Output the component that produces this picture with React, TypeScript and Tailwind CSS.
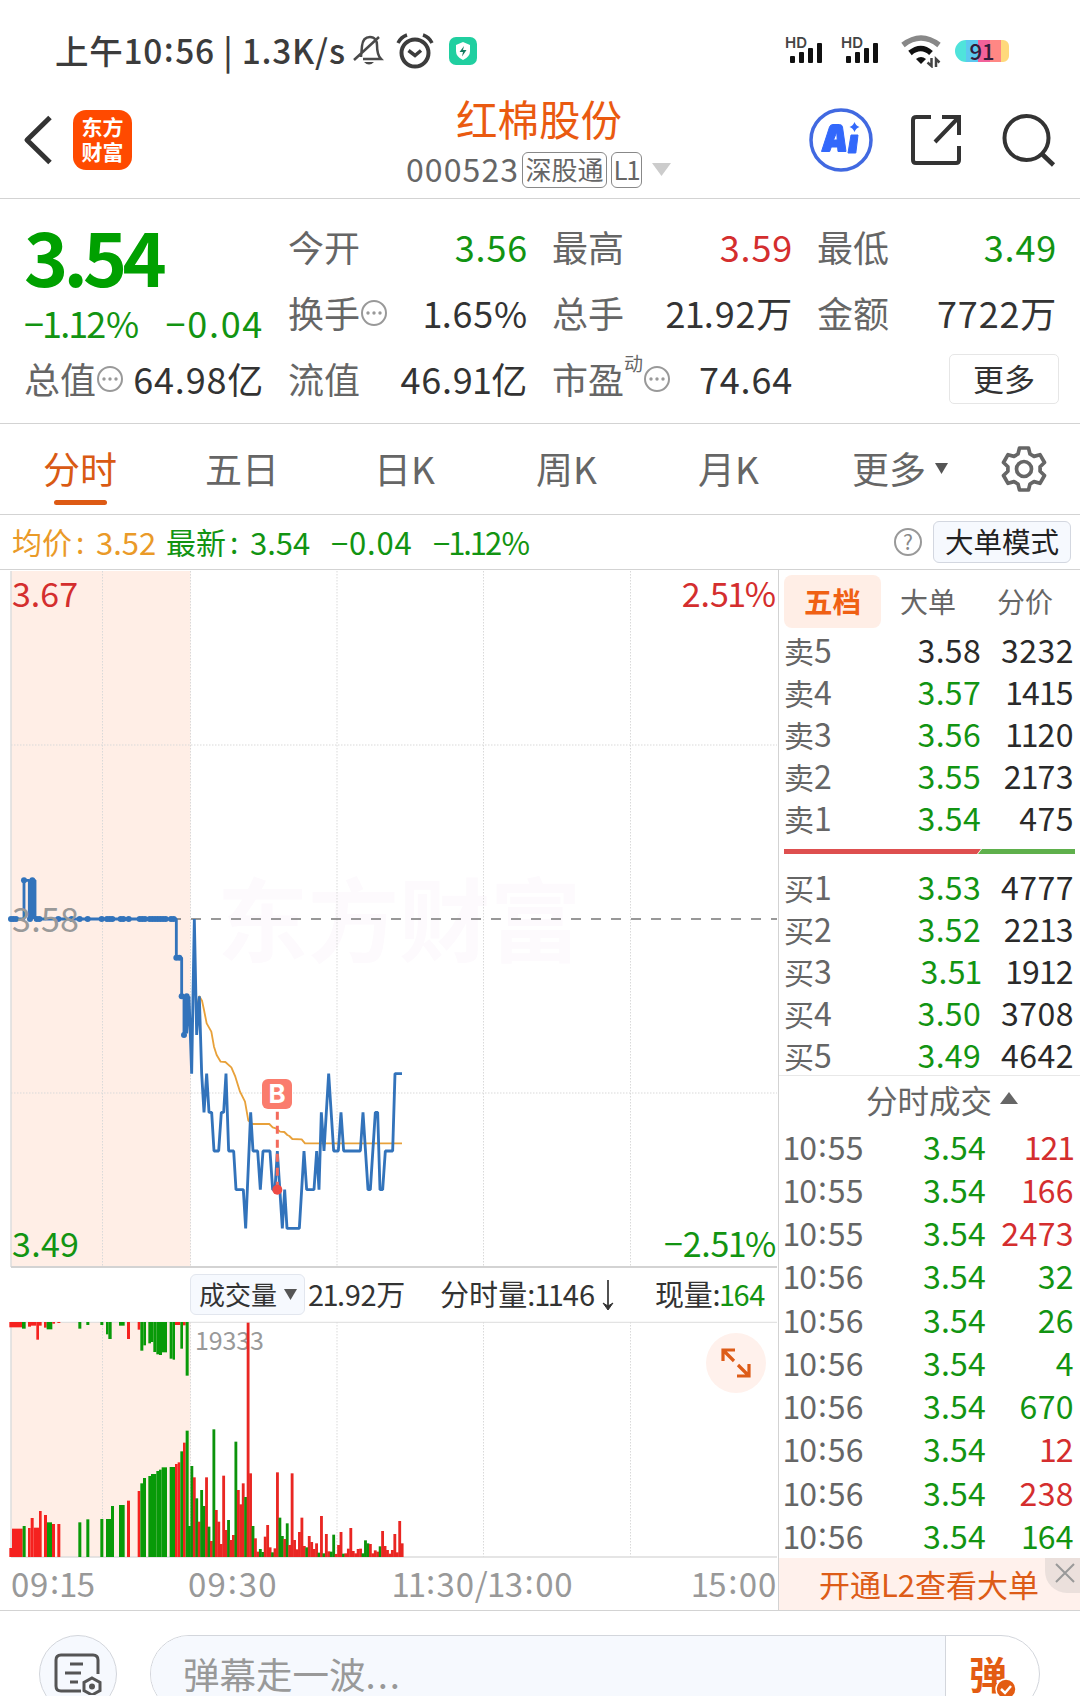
import React from "react";

const RED = "#f5221f";
const GREEN = "#089a08";

type Bar = [number, number, number, "r" | "g"];

// Call-auction bars: left, right, top edge, direction
const auctionBars: Bar[] = [
  [28, 36, 864, "r"], [36, 68, 806, "r"], [68, 77, 798, "g"], [84, 92, 804, "r"], [92, 101, 774, "r"],
  [101, 117, 803, "r"], [117, 125, 753, "r"], [132, 141, 765, "r"], [141, 156, 787, "g"], [156, 165, 792, "r"],
  [172, 181, 792, "r"], [235, 244, 787, "g"], [259, 268, 778, "g"], [301, 310, 777, "g"], [318, 333, 777, "g"],
  [333, 342, 738, "g"], [357, 374, 735, "g"], [381, 390, 722, "r"], [413, 421, 693, "r"], [421, 429, 670, "g"],
  [429, 438, 654, "g"], [445, 453, 648, "g"], [453, 469, 642, "g"], [469, 477, 633, "g"], [477, 485, 629, "g"],
  [485, 501, 622, "g"], [509, 525, 621, "g"], [525, 533, 612, "r"], [533, 541, 607, "r"], [541, 549, 574, "g"],
  [549, 557, 548, "r"], [557, 566, 512, "g"],
];

// Unmatched volume hanging from the top: left, right, bottom edge, direction
const unmatchedBars: Bar[] = [
  [28, 66, 202, "r"], [66, 77, 206, "g"], [84, 93, 200, "r"], [93, 109, 197, "r"], [109, 117, 239, "r"],
  [117, 125, 197, "r"], [132, 140, 203, "r"], [140, 157, 208, "g"], [157, 165, 191, "r"], [172, 181, 189, "r"],
  [235, 244, 206, "g"], [259, 268, 195, "g"], [301, 310, 195, "g"], [318, 325, 223, "g"], [325, 335, 237, "g"],
  [357, 374, 197, "g"], [381, 390, 237, "r"], [413, 421, 209, "r"], [421, 430, 272, "g"], [430, 438, 256, "g"],
  [445, 453, 250, "g"], [453, 460, 246, "g"], [460, 469, 276, "g"], [469, 477, 283, "g"], [477, 486, 285, "g"],
  [486, 501, 277, "g"], [509, 518, 296, "g"], [518, 525, 299, "g"], [525, 541, 195, "r"], [541, 549, 266, "g"],
  [549, 557, 196, "r"], [557, 566, 347, "g"],
];

// One bar a minute from 09:30: top edge and direction
const minuteBars =
  "798g 618g 652r 715g 785r 690g 738g 652r 800g 843r 508g 750r 785r 852r 647r 810r 780g 840r 825r 545g 690r 733r 670r 711g 188r 640r 798g 835r 875r 867g 876g 830r 795r 862r 877g 865r 637r 773g 828g 837r 790g 855r 640r 840r 868r 816r 773r 858r 862g 828r 846r 867r 850r 878g 768r 880g 822r 874r 875g 824g 882r 855r 816r 881g 880r 866r 804r 873r 880r 867r 866r 880g 841g 850g 852r 880r 871r 875r 859g 813r 858r 870r 881r 870r 822r 877r 783r 850r"
    .split(" ")
    .map((s) => ({ top: parseInt(s, 10), up: s.endsWith("r") }));

const pricePath =
  "30,207 72,207 72,91 88,91 88,207 93,91 97,207 101,91 105,91 105,207 529,207 529,323 545,323 545,439 552,439 552,555 560,439 560,550 567,439 575,671 583,207 590,555 598,439 605,671 612,787 620,671 627,787 635,787 642,903 656,903 664,787 671,787 678,671 686,903 701,903 708,1019 730,1019 737,1135 752,787 759,903 773,903 781,1019 789,903 810,903 818,1019 825,1019 832,903 847,1135 854,1019 861,1135 898,1135 912,903 920,1019 942,1019 950,903 957,1019 964,787 972,903 986,671 1001,903 1015,903 1023,787 1031,903 1081,903 1089,787 1104,1019 1111,1019 1126,787 1133,787 1140,1019 1148,1019 1156,903 1178,903 1185,671 1206,671";

const averagePath =
  "590,470 598,439 606,452 612,480 620,520 634,545 642,590 650,615 662,635 676,636 694,652 706,680 720,725 735,755 745,812 757,822 808,822 818,832 830,836 840,845 853,846 862,855 868,858 877,867 905,868 915,880 1206,880";

const auctionDots: [number, number][] = [
  [33, 207], [40, 207], [48, 207], [72, 91], [97, 91], [90, 207], [110, 207], [118, 207], [175, 207], [215, 207],
  [239, 207], [263, 207], [305, 207], [321, 207], [329, 207], [337, 207], [362, 207], [370, 207], [386, 207],
  [419, 207], [427, 207], [435, 207], [449, 207], [457, 207], [465, 207], [473, 207], [481, 207], [489, 207],
  [497, 207], [513, 207], [521, 207], [529, 323], [538, 323], [545, 439], [560, 439], [552, 555],
];

const GRID_X = [102.5, 190.5, 337, 483.5, 630.5];

// Figures with a narrow "1", as in a proportional numeral set
function Num({ children }: { children: string }) {
  return (
    <>
      {children.split(/(1)/).map((part, i) =>
        part === "1" ? <span key={i} className="-mx-[0.045em]">1</span> : part
      )}
    </>
  );
}

function Colon() {
  return <span className="relative -top-[0.08em] mx-[0.02em]">:</span>;
}

function Signal() {
  return (
    <div className="relative h-[34px] w-[37px]">
      <span className="absolute -left-px top-[1px] font-['Inter'] text-[15px] font-semibold leading-[15px] text-[#444]">HD</span>
      <svg className="absolute left-0 top-0" width="37" height="34" fill="#111">
        <rect x="4" y="22" width="5" height="7" rx="1" />
        <rect x="13" y="18" width="5" height="11" rx="1" />
        <rect x="22" y="14" width="5" height="15" rx="1" />
        <rect x="31" y="9" width="5" height="20" rx="1" />
      </svg>
    </div>
  );
}

function StatusBar() {
  return (
    <div className="flex h-[100px] items-center pt-[2px] text-[#3c3c3c]">
      <div className="ml-[55px] w-[293px] whitespace-nowrap pb-[2px] text-[33.500px] font-medium leading-none tracking-[0.75px]">
        上午10<Colon />56 | 1.3K/s
      </div>
      <svg className="ml-[4px]" width="32" height="36" viewBox="0 0 32 36" fill="none" stroke="#4a4a4a" strokeWidth="2.5">
        <path d="M9 24 10 13C10.500 8 13 4 18 4s7 4 7 8c0 7 1 11 4 14H11M2 27 27 4" />
        <path d="M12 29q5 5 10 0z" fill="#4a4a4a" stroke="none" />
      </svg>
      <svg className="ml-[12px]" width="38" height="38" viewBox="0 0 38 38" fill="none" stroke="#3c3c3c" strokeWidth="4">
        <circle cx="19" cy="21" r="13.5" />
        <path d="M12.5 18.500l6.5 5 6-5" strokeWidth="3.5" />
        <path d="M2 11Q5 5 11 3M36 11Q33 5 27 3" strokeWidth="3.5" />
      </svg>
      <div className="ml-[15px] flex h-[28px] w-[28px] items-center justify-center rounded-[7px] bg-[#20cfa0]">
        <svg width="16" height="18" viewBox="0 0 16 18">
          <path d="M8 0 15 3v6q0 6-7 9-7-3-7-9V3z" fill="#fff" />
          <path d="M9 4 4.500 10H8l-1 4.500L11.500 8H8z" fill="#137a60" />
        </svg>
      </div>
      <div className="ml-auto flex items-center">
        <Signal />
        <div className="w-[19px]" />
        <Signal />
        <svg className="ml-[22px]" width="40" height="34" viewBox="0 0 40 34" fill="none">
          <path d="M2 11Q20-3 38 11" stroke="#888" strokeWidth="5.500" />
          <path d="M9 19Q20 10 30 19" stroke="#111" strokeWidth="5.500" />
          <path d="M15 25q5-4 10 0l-5 5z" fill="#111" />
          <path d="M30.500 24v8l-4-3.500M35 33v-8l3.500 3.500" stroke="#444" strokeWidth="2.500" />
        </svg>
        <div className="relative ml-[14px] mr-[71px] h-[22px] w-[54px]">
          <div className="flex h-full w-full overflow-hidden rounded-l-[11px] rounded-r-[6px]">
            <div className="w-[11px] bg-[#4fe3db]" />
            <div className="w-[12px] bg-[#5cc8f0]" />
            <div className="w-[12px] bg-[#f2619a]" />
            <div className="w-[11px] bg-[#ff8784]" />
            <div className="w-[8px] bg-[#ffd97c]" />
          </div>
          <span className="absolute -top-[6px] left-0 w-full text-center text-[22px] font-medium leading-[32px] text-[#321b3b]">91</span>
        </div>
      </div>
    </div>
  );
}

function Header() {
  return (
    <div className="flex h-[99px] items-center border-b border-[#d3d3d3]">
      <svg className="mb-[19px] ml-[22px]" width="32" height="50" viewBox="0 0 32 50" fill="none" stroke="#333" strokeWidth="5" strokeLinejoin="round">
        <path d="M28 2.500 5 25l23 22.500" />
      </svg>
      <div className="mb-[18px] ml-[19px] flex h-[60px] w-[59px] flex-col items-center justify-center rounded-[13px] bg-[#ff4a00] pb-[3px] text-[21px] font-bold leading-[25px] text-white">
        <span>东方</span>
        <span>财富</span>
      </div>
      <div className="ml-[274px] flex h-full w-[265px] flex-col">
        <div className="mt-[-2px] pl-[50px] text-[41.500px] leading-[40px] text-[#ea5a10]">红棉股份</div>
        <div className="mt-[14px] flex h-[35px] items-center text-[#666]">
          <span className="w-[116px] pb-[4px] text-[32px] leading-none tracking-[1.1px]">000523</span>
          <span className="flex h-[36px] w-[85px] shrink-0 items-center justify-center rounded-[6px] border-[1.500px] border-[#888] pb-[2px] text-[26px] leading-none">深股通</span>
          <span className="ml-[4px] flex h-[36px] w-[31px] shrink-0 items-center justify-center rounded-[6px] border-[1.500px] border-[#888] pb-[2px] text-[26px] leading-none"><Num>L1</Num></span>
          <svg className="ml-[10px] shrink-0" width="19" height="13"><path d="M0 0h19L9.500 13z" fill="#ccc" /></svg>
        </div>
      </div>
      <svg className="mb-[18px] ml-[138px] shrink-0" width="64" height="64" viewBox="0 0 64 64">
        <circle cx="32" cy="32" r="30" fill="none" stroke="#4169e1" strokeWidth="3.500" />
        <path d="M12.500 43.500 20.500 19q.8-2.500 3.500-2.500h6.500q2.500 0 3 2.500l3.500 24.500h-8l-.4-4.500h-6.300l-1.600 4.500zM24.500 32h3.700l-.4-8z" fill="#3268fb" fillRule="evenodd" stroke="#3268fb" strokeLinejoin="round" />
        <path d="M42 27h7l-2.200 18h-7.800z" fill="#3268fb" stroke="#3268fb" strokeLinejoin="round" />
        <path d="M45.500 14q1.500 4 5 5-3.500 1-5 5-1.500-4-5-5 3.500-1 5-5z" fill="#3268fb" />
      </svg>
      <svg className="mb-[18px] ml-[36px] shrink-0" width="54" height="54" viewBox="0 0 54 54" fill="none" stroke="#333" strokeWidth="4">
        <path d="M22 4H7.500Q4 4 4 7v40q0 3 3 3h40q3 0 3-3V33M33 4h17v18M50 4 26 29" />
      </svg>
      <svg className="mb-[18px] ml-[37px] shrink-0" width="56" height="56" viewBox="0 0 56 56" fill="none" stroke="#333" strokeWidth="4">
        <circle cx="26.500" cy="26" r="22" />
        <path d="m42 42 11.500 11" strokeWidth="4.500" />
      </svg>
    </div>
  );
}

function Dots() {
  return (
    <svg className="mb-[4px] shrink-0" width="28" height="28" viewBox="0 0 28 28">
      <circle cx="14" cy="14" r="12" fill="none" stroke="#999" strokeWidth="2" />
      <g fill="#999"><circle cx="8" cy="14" r="1.700" /><circle cx="14" cy="14" r="1.700" /><circle cx="20" cy="14" r="1.700" /></g>
    </svg>
  );
}

function Stat({ label, value, color = "text-[#333]", dots = false, sup }: { label: string; value: string; color?: string; dots?: boolean; sup?: string }) {
  return (
    <div className="flex h-[66px] items-center text-[36px] leading-none">
      <span className="shrink-0 pb-[6px] text-[#666]">{label}</span>
      {sup && <span className="mb-[37px] text-[19px] text-[#666]">{sup}</span>}
      {dots && <Dots />}
      <span className={"ml-auto whitespace-nowrap pb-[7px] tracking-[0.8px] " + color}><Num>{value}</Num></span>
    </div>
  );
}

function Quote() {
  return (
    <div className="flex h-[225px] border-b border-[#d3d3d3] pl-[24px] pt-[17px]">
      <div className="w-[240px]">
        <div className="h-[86px] text-[75px] font-bold leading-[77px] tracking-[-4.800px] text-[#00a000]">3.54</div>
        <div className="flex h-[46px] items-center justify-between whitespace-nowrap pb-[6px] text-[36px] leading-none text-[#129412]">
          <span className="tracking-[-0.3px]"><Num>−1.12%</Num></span>
          <span className="tracking-[1.7px]">−0.04</span>
        </div>
        <Stat label="总值" value="64.98亿" dots />
      </div>
      <div className="ml-[24px] w-[240px]">
        <Stat label="今开" value="3.56" color="text-[#129412]" />
        <Stat label="换手" value="1.65%" dots />
        <Stat label="流值" value="46.91亿" />
      </div>
      <div className="ml-[24px] w-[241px]">
        <Stat label="最高" value="3.59" color="text-[#d42e2e]" />
        <Stat label="总手" value="21.92万" />
        <Stat label="市盈" sup="动" value="74.64" dots />
      </div>
      <div className="ml-[24px] w-[240px]">
        <Stat label="最低" value="3.49" color="text-[#129412]" />
        <Stat label="金额" value="7722万" />
        <button className="ml-auto mt-[6px] flex h-[50px] w-[110px] translate-x-[2px] items-center justify-center rounded-[5px] border-[1.500px] border-[#e6e6e6] pb-[3px] text-[31px] leading-none text-[#333]">更多</button>
      </div>
    </div>
  );
}

function PeriodTabs() {
  return (
    <div className="flex h-[91px] items-center border-b border-[#d3d3d3] pb-px text-[37px] leading-none text-[#666]">
      <div className="relative ml-[43px] w-[162px] pb-[1px] text-[#d95a14]">
        分时
        <div className="absolute -bottom-[17px] left-[11px] h-[5px] w-[53px] rounded-full bg-[#dd5a14]" />
      </div>
      <span className="w-[169px] pb-[1px]">五日</span>
      <span className="w-[162px] pb-[1px]">日K</span>
      <span className="w-[162px] pb-[1px]">周K</span>
      <span className="w-[154px] pb-[1px]">月K</span>
      <span className="pb-[1px]">更多</span>
      <svg className="ml-[9px]" width="13" height="11"><path d="M0 0h13L6.500 11z" fill="#555" /></svg>
      <svg className="ml-[52px]" width="48" height="48" viewBox="0 0 48 48" fill="none" stroke="#666" strokeWidth="3.700" strokeLinejoin="round">
        <path d="M19.500 3h9l1.500 6 4 2.400 6-1.700 4.500 7.800-4.400 4.300v4.400l4.400 4.300-4.500 7.800-6-1.700-4 2.400-1.500 6h-9l-1.500-6-4-2.400-6 1.700-4.500-7.800 4.400-4.300v-4.400l-4.400-4.300L8 9.700l6 1.700L18 9z" />
        <circle cx="24" cy="24" r="7.500" />
      </svg>
    </div>
  );
}

function InfoLine() {
  return (
    <div className="flex h-[55px] items-center border-b border-[#d3d3d3] pl-[12px] text-[30px] leading-none text-[#129412]">
      <div className="flex whitespace-nowrap pb-[2px]">
        <span className="w-[84px] text-[#ea9a28]">均价<span className="ml-[4px]">:</span></span>
        <span className="w-[70px] text-[31px] text-[#ea9a28]">3.52</span>
        <span className="w-[84px]">最新<span className="ml-[4px]">:</span></span>
        <span className="w-[81px] text-[31px]">3.54</span>
        <span className="w-[102px] text-[31px] tracking-[0.8px]">−0.04</span>
        <span className="text-[31px] tracking-[-0.7px]"><Num>−1.12%</Num></span>
      </div>
      <div className="ml-auto mr-[11px] flex h-[28px] w-[28px] items-center justify-center rounded-full border-2 border-[#999] pb-[2px] text-[21px] text-[#888]">?</div>
      <div className="mr-[9px] flex h-[42px] w-[138px] items-center justify-center rounded-[6px] border border-[#d3d7e0] bg-[#f6f9fe] pb-[1px] text-[28.500px] text-[#222]">大单模式</div>
    </div>
  );
}

function PriceChart() {
  return (
    <div className="relative h-[698px]">
      <span className="absolute left-[217px] top-[300px] text-[91px] font-bold leading-[91px] text-[#fdfafd]">东方财富</span>
      <svg className="absolute left-0 top-0" width="778" height="698" viewBox="0 570 778 698">
        <rect x="11" y="571" width="179.500" height="696" fill="#ffeee6" />
        <g stroke="#d9d9d9" strokeDasharray="1.500 1.500">
          {GRID_X.map((x) => <path key={x} d={`M${x} 571V1267`} />)}
          <path d="M11 745H777M11 1093H777" />
        </g>
        <path d="M11 571V1267" stroke="#ddd" strokeWidth="1.500" />
        <path d="M11 1267H777" stroke="#d3d3d3" strokeWidth="2" />
        <path d="M171 919H777" stroke="#777" strokeWidth="1.600" strokeDasharray="10 10" />
        <g transform="translate(0 850) scale(.33333)" fill="none" strokeLinejoin="round">
          <polyline points={averagePath} stroke="#e8a13a" strokeWidth="5.500" />
          <polyline points={pricePath} stroke="#3273bb" strokeWidth="8.500" strokeLinejoin="miter" strokeMiterlimit="1" />
          {auctionDots.map(([x, y]) => <circle key={`${x}-${y}`} cx={x} cy={y} r="9" fill="#3273bb" />)}
          <path d="M832 785V1019" stroke="#f36a5c" strokeWidth="9" strokeDasharray="24 18" />
          <circle cx="832" cy="1019" r="15" fill="#ee4a45" />
        </g>
      </svg>
      <div className="absolute left-[262px] top-[509px] flex h-[30px] w-[30px] items-center justify-center rounded-[6px] bg-[#fa7c6d] font-['Inter'] text-[26px] font-bold leading-none text-white">B</div>
      <span className="absolute left-[12px] top-[6px] text-[34px] leading-[34px] text-[#d42e2e]">3.67</span>
      <span className="absolute right-[2px] top-[6px] text-[34px] leading-[34px] text-[#d42e2e]"><Num>2.51%</Num></span>
      <span className="absolute left-[12px] top-[331px] text-[34px] leading-[34px] tracking-[0.3px] text-[#999]">3.58</span>
      <span className="absolute left-[12px] top-[656px] text-[34px] leading-[34px] tracking-[0.3px] text-[#129412]">3.49</span>
      <span className="absolute right-[2px] top-[656px] text-[34px] leading-[34px] tracking-[-0.2px] text-[#129412]"><Num>−2.51%</Num></span>
    </div>
  );
}

function VolumeChart() {
  return (
    <>
      <div className="flex h-[54px] items-center whitespace-nowrap pl-[190px] text-[29px] leading-none text-[#333]">
        <div className="flex h-[41px] w-[115px] shrink-0 items-center rounded-[6px] border border-[#e2e6ee] bg-[#f6f9fe] pl-[8px] text-[26px]">
          <span className="pb-px">成交量</span>
          <svg className="ml-[7px]" width="13" height="11"><path d="M0 0h13L6.500 11z" fill="#555" /></svg>
        </div>
        <span className="ml-[3px] w-[132px] pb-[2px] tracking-[-0.3px]"><Num>21.92万</Num></span>
        <span className="w-[156px] pb-[2px] tracking-[0.1px]"><Num>分时量:1146</Num></span>
        <svg className="mt-px" width="24" height="32" viewBox="0 0 24 32"><path d="M12 1v27" stroke="#333" strokeWidth="1.700" /><path d="m7 24 5 3 5-3-5 7z" fill="#333" stroke="#333" /></svg>
        <span className="ml-[35px] pb-[2px] tracking-[-0.3px]">现量:<span className="text-[#129412]"><Num>164</Num></span></span>
      </div>
      <div className="relative h-[237px]">
        <svg className="absolute left-0 top-0" width="778" height="237" viewBox="0 1321 778 237">
          <rect x="11" y="1322" width="179.500" height="235" fill="#ffeee6" />
          <g stroke="#d9d9d9" strokeDasharray="1.500 1.500">
            {GRID_X.map((x) => <path key={x} d={`M${x} 1322V1557`} />)}
          </g>
          <path d="M11 1322V1557" stroke="#ddd" strokeWidth="1.500" />
          <path d="M11 1322.300H777" stroke="#ddd" />
          <path d="M11 1557H777" stroke="#ddd" strokeWidth="1.500" />
          <text x="195" y="1349.500" fontSize="25" fill="#999" textLength="69">19333</text>
          <g transform="translate(0 1260) scale(.33333)">
            {unmatchedBars.map(([a, b, y, c]) => <rect key={a} x={a} y="186" width={b - a} height={y - 186} fill={c === "r" ? RED : GREEN} />)}
            {auctionBars.map(([a, b, y, c]) => <rect key={a} x={a} y={y} width={b - a} height={891 - y} fill={c === "r" ? RED : GREEN} />)}
            {minuteBars.map((m, i) => <rect key={i} x={564 + i * 7.336} y={m.top} width="8.500" height={891 - m.top} fill={m.up ? "#e92622" : "#0b930b"} />)}
          </g>
        </svg>
        <div className="absolute left-[706px] top-[12px] flex h-[60px] w-[60px] items-center justify-center rounded-full bg-[#fff1ec]">
          <svg width="32" height="32" viewBox="0 0 32 32" fill="none" stroke="#dd5c18" strokeWidth="3.200">
            <path d="M3 14V3h12M3 3l11 11M18 18l11 11M29 17v12H17" />
          </svg>
        </div>
      </div>
      <div className="flex h-[52px] items-center text-[33px] leading-none text-[#999]">
        <span className="ml-[11px] w-[177px] pb-[2px] tracking-[0.8px]"><Num>09</Num><Colon /><Num>15</Num></span>
        <span className="w-[205px] pb-[2px] tracking-[1.2px]">09<Colon />30</span>
        <span className="pb-[2px] tracking-[0.8px]"><Num>11</Num><Colon />30/<Num>13</Num><Colon />00</span>
        <span className="ml-auto mr-px pb-[2px] tracking-[0.8px]"><Num>15</Num><Colon />00</span>
      </div>
    </>
  );
}

const asks = [["卖5", "3.58", "3232"], ["卖4", "3.57", "1415"], ["卖3", "3.56", "1120"], ["卖2", "3.55", "2173"], ["卖1", "3.54", "475"]];
const bids = [["买1", "3.53", "4777"], ["买2", "3.52", "2213"], ["买3", "3.51", "1912"], ["买4", "3.50", "3708"], ["买5", "3.49", "4642"]];
const trades: [string, string, boolean][] = [
  ["55", "121", true], ["55", "166", true], ["55", "2473", true], ["56", "32", false], ["56", "26", false],
  ["56", "4", false], ["56", "670", false], ["56", "12", true], ["56", "238", true], ["56", "164", false],
];

function Level({ row }: { row: string[] }) {
  return (
    <div className="flex h-[42px] items-center pb-[3px] pl-[5px] text-[32px] leading-none">
      <span className="w-[71px] text-[#666]"><span className="text-[30px]">{row[0][0]}</span>{row[0][1]}</span>
      <span className={"w-[126px] text-right tracking-[0.3px] " + (row[1] === "3.58" ? "text-[#2a2a2a]" : "text-[#129412]")}><Num>{row[1]}</Num></span>
      <span className="w-[93px] text-right tracking-[0.5px] text-[#2a2a2a]"><Num>{row[2]}</Num></span>
    </div>
  );
}

function SidePanel() {
  return (
    <div className="flex flex-1 flex-col border-l border-[#d3d3d3]">
      <div className="flex h-[60px] items-center pl-[5px] text-[28px] leading-none text-[#666]">
        <div className="mt-[4px] flex h-[53px] w-[97px] items-center justify-center rounded-[8px] bg-[#ffeee6] pb-[2px] text-[28.500px] font-bold text-[#f06014]">五档</div>
        <span className="ml-[19px] mt-[3px]">大单</span>
        <span className="ml-[41px] mt-[3px]">分价</span>
      </div>
      {asks.map((r) => <Level key={r[0]} row={r} />)}
      <svg className="ml-[5px] mt-[9px]" width="291" height="5">
        <path d="M0 0h197l-4 5H0z" fill="#de4f4f" />
        <path d="M198 0h93v5h-97z" fill="#5fb04c" />
      </svg>
      <div className="h-[13px]" />
      {bids.map((r) => <Level key={r[0]} row={r} />)}
      <div className="mt-[-2px] flex h-[51px] items-center border-t border-[#e8e8e8] pb-[2px] pl-[87px] text-[31.500px] leading-none text-[#666]">
        <span>分时成交</span>
        <svg className="mb-[4px] ml-[8px]" width="18" height="12"><path d="M9 0l9 12H0z" fill="#666" /></svg>
      </div>
      {trades.map(([t, v, up], i) => (
        <div key={i} className="flex h-[43.300px] items-center pb-[3px] pl-[5px] text-[32px] leading-none">
          <span className="w-[91px] tracking-[0.3px] text-[#666]"><Num>10</Num><Colon />{t}</span>
          <span className="w-[111px] text-right tracking-[0.2px] text-[#129412]">3.54</span>
          <span className={"w-[88px] text-right tracking-[0.4px] " + (up ? "text-[#d42e2e]" : "text-[#129412]")}><Num>{v}</Num></span>
        </div>
      ))}
      <div className="relative mt-auto flex h-[52px] items-center bg-[#fff1ec] pb-[2px] pl-[40px] text-[31px] leading-none text-[#dd5c18]">
        开通L2查看大单
        <div className="absolute right-0 top-0 flex h-[35px] w-[35px] items-center justify-center rounded-bl-[22px] bg-[#ebe0dc]">
          <svg className="mb-[5px] ml-[5px]" width="20" height="20" stroke="#999" strokeWidth="2"><path d="m1 1 18 18M19 1 1 19" /></svg>
        </div>
      </div>
    </div>
  );
}

function CommentBar() {
  return (
    <div className="flex pl-[39px] pt-[24px]">
      <div className="flex h-[78px] w-[78px] items-center justify-center rounded-full border-[1.500px] border-[#d3d6dc] bg-[#f6f9fe]">
        <svg width="48" height="42" viewBox="0 0 48 42" fill="none" stroke="#555" strokeWidth="3">
          <path d="M44 21V7q0-5-5-5H7Q2 2 2 7v26q0 5 5 5h20M16 11h13M11 20h16M16 29h8" />
          <path d="m38 25 8 4.500v8L38 42l-8-4.500v-8z" />
          <circle cx="38" cy="33.500" r="1.500" fill="#555" />
        </svg>
      </div>
      <div className="ml-[33px] flex h-[78px] w-[890px] overflow-hidden rounded-full border-[1.500px] border-[#d3d6dc]">
        <div className="flex flex-1 items-center border-r border-[#d3d6dc] bg-[#f6f9fe] pl-[32px] text-[36.500px] leading-none text-[#999]">弹幕走一波<span className="tracking-[2px]">...</span></div>
        <div className="relative w-[93px] pl-[23px] pt-[18px] text-[38px] font-bold leading-[38px] text-[#e35c12]">
          弹
          <svg className="absolute left-[49px] top-[42px]" width="22" height="22" viewBox="0 0 22 22"><circle cx="11" cy="11" r="10" fill="#e35c12" stroke="#fff" strokeWidth="1.500" /><path d="m6 11 4 4 6-7" fill="none" stroke="#fff" strokeWidth="2.500" /></svg>
        </div>
      </div>
    </div>
  );
}

export default function App() {
  return (
    <div className="h-[1696px] w-[1080px] overflow-hidden bg-white font-['Noto_Sans_CJK_SC','Noto_Sans',sans-serif]">
      <StatusBar />
      <Header />
      <Quote />
      <PeriodTabs />
      <InfoLine />
      <div className="flex h-[1041px] border-b border-[#d3d3d3]">
        <div className="flex w-[778px] flex-col">
          <PriceChart />
          <VolumeChart />
        </div>
        <SidePanel />
      </div>
      <CommentBar />
    </div>
  );
}
